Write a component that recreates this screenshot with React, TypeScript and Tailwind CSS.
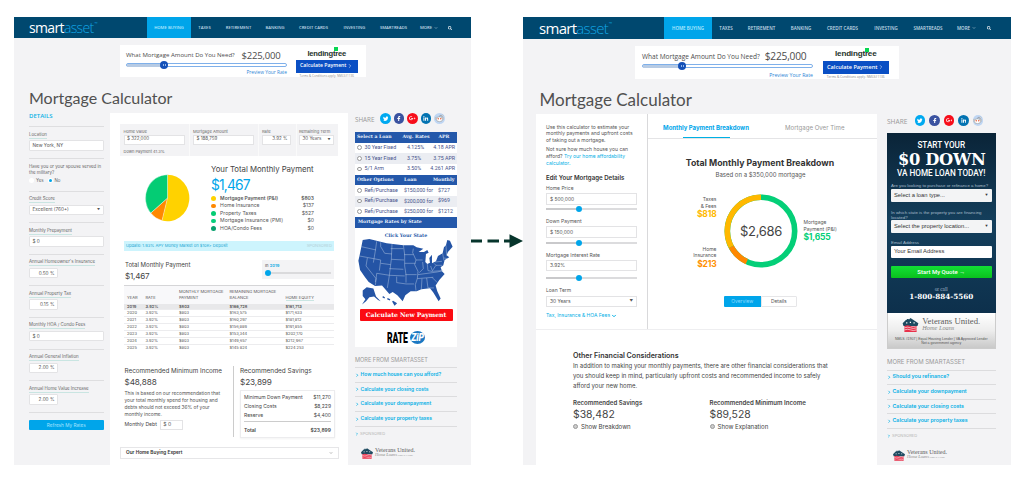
import React from "react";
import clsx from "clsx";
import { FaTwitter, FaFacebookF, FaGooglePlusG, FaLinkedinIn, FaSearch } from "react-icons/fa";
import { ChevronDown, ChevronRight } from "lucide-react";

type Size = { small?: boolean };

function Logo({ className }: { className: string }) {
  return (
    <div className={clsx("flex items-center font-['Open_Sans',sans-serif] font-normal text-white", className)}>
      smart<span className="font-light text-[#12a6e4]">asset</span>
      <span className="-mt-[8px] ml-[1px] text-[4px] tracking-normal text-[#0aa5e2]">™</span>
    </div>
  );
}

function Nav({ small }: Size) {
  const items: [string, string][] = small
    ? [["TAXES", "w-[27px]"], ["RETIREMENT", "w-[41px]"], ["BANKING", "w-[32px]"], ["CREDIT CARDS", "w-[45px]"], ["INVESTING", "w-[37px]"], ["SMARTREADS", "w-[41px]"]]
    : [["TAXES", "w-[28px]"], ["RETIREMENT", "w-[43px]"], ["BANKING", "w-[36px]"], ["CREDIT CARDS", "w-[47px]"], ["INVESTING", "w-[40px]"], ["SMARTREADS", "w-[44px]"]];
  return (
    <nav
      className={clsx(
        "flex items-stretch bg-[#00486f] text-center font-['Open_Sans',sans-serif] font-semibold text-[#c3dbe7]",
        small ? "h-[21px] pl-[15px] text-[4.2px] leading-[21px]" : "h-[22px] pl-[16px] text-[4.5px] leading-[22px]",
      )}
    >
      <Logo className={small ? "w-[118px] text-[14px] tracking-[-0.65px]" : "w-[125px] text-[15px] tracking-[-0.7px]"} />
      <div className={clsx("bg-[#00a5ea] text-[#b9eaff]", small ? "w-[44px]" : "w-[48px]")}>HOME BUYING</div>
      {items.map(([t, w]) => (
        <div key={t} className={w}>{t}</div>
      ))}
      <div className={clsx("flex items-center justify-center gap-[2px]", small ? "w-[30px]" : "w-[33px]")}>
        MORE <ChevronDown className="size-[4px]" strokeWidth={3} />
      </div>
      <div className="flex w-[12px] items-center justify-center text-white">
        <FaSearch className="size-[4px]" />
      </div>
    </nav>
  );
}

function LenderBanner({ small }: Size) {
  return (
    <div
      className={clsx(
        "flex bg-white font-['Open_Sans',sans-serif]",
        small ? "ml-[106px] mt-[7px] h-[32px] w-[246px] pl-[6px]" : "ml-[112px] mt-[7px] h-[33px] w-[264px] pl-[7px]",
      )}
    >
      <div className={small ? "w-[161px]" : "w-[171px]"}>
        <div className={clsx("mt-[4.5px] flex h-[13px] items-center justify-between text-[#4c4c4c]", small ? "pr-[6.5px]" : "pr-[6.5px]")}>
          <span className={small ? "text-[6.05px]" : "text-[6.55px]"}>What Mortgage Amount Do You Need?</span>
          <span className={small ? "text-[9.5px] tracking-[-0.2px]" : "text-[10.2px] tracking-[-0.2px]"}>$225,000</span>
        </div>
        <div className="mt-[0.5px] flex h-[4px] items-center rounded-full border border-[#7fb0ea] bg-white">
          <div className={clsx("h-[3px] bg-[#b7cbe4]", small ? "w-[33px]" : "w-[35px]")} />
          <div className="flex size-[8px] shrink-0 items-center justify-center rounded-full bg-[#1450b8]">
            <div className="h-[2px] w-[3px] border-x border-[#8eb5ea]" />
          </div>
        </div>
        <div className={clsx("text-right text-[#2f86d6]", small ? "mt-[3px] text-[4.8px] leading-[5px]" : "mt-[4px] text-[5.2px] leading-[6px]")}>Preview Your Rate</div>
      </div>
      <div className={small ? "ml-[9px] w-[61.5px]" : "ml-[10px] w-[65.5px]"}>
        <div className={clsx("relative mt-[4px] flex h-[9px] items-center justify-center font-['Liberation_Sans',sans-serif] font-bold tracking-[-0.2px] text-[#25332c]", small ? "text-[7.6px]" : "text-[8.1px]")}>
          lendingtree
          <span className="absolute right-[20px] top-[-2px] size-[4px] bg-[#08d651]" />
        </div>
        <div className={clsx("mt-[2px] flex h-[12.5px] items-center justify-center bg-[#0a4fc4] font-semibold text-white", small ? "text-[5.15px]" : "text-[5.6px]")}>
          Calculate Payment <ChevronRight className="ml-[1px] size-[6px]" />
        </div>
        <div className={clsx("mt-px text-center leading-[4px] text-[#888]", small ? "text-[3px]" : "text-[3.2px]")}>Terms &amp; Conditions apply. NMLS#1136</div>
      </div>
    </div>
  );
}

function Share({ small }: Size) {
  const c = "flex size-[10.5px] items-center justify-center rounded-full text-white";
  return (
    <div className={clsx("flex h-[11px] items-center", small ? "gap-[3.1px]" : "gap-[4px]")}>
      <span className={clsx("pt-[2px] font-['Open_Sans',sans-serif] text-[#999]", small ? "w-[22px] text-[6.3px]" : "w-[23.5px] text-[6.6px]")}>SHARE</span>
      <span className={clsx(c, "bg-[#00a9f0]")}><FaTwitter className="size-[5.5px]" /></span>
      <span className={clsx(c, "bg-[#3a52a0]")}><FaFacebookF className="size-[5.5px]" /></span>
      <span className={clsx(c, "bg-[#f70d1a]")}><FaGooglePlusG className="size-[6.5px]" /></span>
      <span className={clsx(c, "bg-[#0272b1]")}><FaLinkedinIn className="size-[5.5px]" /></span>
      <span className={clsx(c, "bg-[#bfd6f3]")}>
        <svg viewBox="0 0 10 10" className="size-[9px]">
          <path d="M5 3.2 5.6 1.4 8 2" fill="none" stroke="#777" strokeWidth=".5" />
          <circle cx="8" cy="2" r=".9" fill="#fff" stroke="#777" strokeWidth=".4" />
          <circle cx="1.4" cy="4.8" r="1.1" fill="#fff" stroke="#777" strokeWidth=".4" />
          <circle cx="8.6" cy="4.8" r="1.1" fill="#fff" stroke="#777" strokeWidth=".4" />
          <ellipse cx="5" cy="5.8" rx="3.6" ry="2.7" fill="#fff" stroke="#777" strokeWidth=".5" />
          <circle cx="3.6" cy="5.3" r=".8" fill="#e5532d" />
          <circle cx="6.4" cy="5.3" r=".8" fill="#e5532d" />
        </svg>
      </span>
    </div>
  );
}

function VeteransLogo({ big }: { big?: boolean }) {
  return (
    <div className="flex items-center">
      <svg viewBox="0 0 18 16" className={big ? "h-[14px] w-[17px]" : "h-[11px] w-[12px]"}>
        <path d="M0 6 4 2h1V1h2v1l2-2 9 6-1 3H1Z" fill="#1d4a60" />
        <path d="M4 5.5h1.4M8.2 5h1.4M12.4 5.5h1.4" stroke="#fff" strokeWidth="1.3" />
        <path d="M2 9q4-1.5 7 0t7 0v7H2Z" fill="#e8304a" />
        <path d="M2 11.2q4-1.5 7 0t7 0M2 13.6q4-1.5 7 0t7 0" stroke="#fff" strokeWidth=".7" fill="none" />
      </svg>
      <div className={clsx("font-['Liberation_Serif',serif] text-[#5c5c5c]", big ? "ml-[3px]" : "ml-[2px]")}>
        <div className={big ? "text-[8.7px] leading-[7.5px]" : "text-[6px] leading-[5px]"}>Veterans United.</div>
        <div className={clsx("italic text-[#888]", big ? "text-[6.3px] leading-[6px]" : "text-[4.3px] leading-[4px]")}>
          Home Loans{!big && <span className="text-[2.8px] not-italic"> NMLS #1907</span>}
        </div>
      </div>
    </div>
  );
}

function MoreLinks({ links, small }: { links: string[]; small?: boolean }) {
  return (
    <div>
      <div className={clsx("h-[8px] font-['Inter',sans-serif] leading-[8px] text-[#999]", small ? "text-[5.6px]" : "text-[6px]")}>MORE FROM SMARTASSET</div>
      <div className="mt-[3.5px]">
        {links.map((l) => (
          <div key={l} className={clsx("flex h-[14.6px] items-center border-t border-[#dcdcde] font-semibold text-[#06b0e6]", small ? "text-[5px]" : "text-[5.25px]")}>
            <ChevronRight className="mr-[1px] size-[4.5px] shrink-0" strokeWidth={4} />
            {l}
          </div>
        ))}
        <div className="flex h-[16px] items-center border-t border-[#dcdcde] text-[4.1px] text-[#b4b4b4]">
          <ChevronRight className="mr-[1px] size-[4px] text-[#06b0e6]" strokeWidth={4} />
          SPONSORED
        </div>
      </div>
    </div>
  );
}

const box = "flex items-center border border-[#e3e3e5] bg-white text-[#555]";

function Field({ label, value, narrow, select }: { label: string; value: string; narrow?: boolean; select?: boolean }) {
  return (
    <div className="h-[31.6px] border-t border-[#dedee0] pt-[4.5px]">
      <div className="flex h-[7px] items-center">
        <span className="border-b border-[#c9e5e2] text-[4.4px] leading-[6px] text-[#666]">{label}</span>
      </div>
      <div className={clsx(box, "mt-[1.5px] h-[10.5px] rounded-[1px] px-[2.5px] text-[4.7px]", narrow ? "w-[29px] justify-end" : "w-full justify-between")}>
        {value}
        {select && <span className="text-[3px]">▼</span>}
      </div>
    </div>
  );
}

function Details() {
  return (
    <aside className="w-[96px] pl-[15px]">
      <div className="w-[74.5px]">
        <div className="h-[13px] font-['Open_Sans',sans-serif] text-[6px] font-semibold leading-[6px] text-[#09b2e6]">DETAILS</div>
        <Field label="Location" value="New York, NY" />
        <div className="h-[33px] border-t border-[#dedee0] pt-[5px] text-[4.4px] leading-[6px] text-[#666]">
          Have you or your spouse served in
          <br />
          the military?
          <div className="mt-[2px] flex items-center">
            <span className="mr-[2px] size-[5px] rounded-full bg-white" />
            <span className="w-[11.5px]">Yes</span>
            <span className="mr-[2px] flex size-[5px] items-center justify-center rounded-full bg-white"><span className="size-[3px] rounded-full bg-[#00a5ea]" /></span>
            No
          </div>
        </div>
        <Field label="Credit Score" value="Excellent (760+)" select />
        <Field label="Monthly Prepayment" value="$ 0" />
        <Field label="Annual Homeowner's Insurance" value="0.50  %" narrow />
        <Field label="Annual Property Tax" value="0.15  %" narrow />
        <Field label="Monthly HOA / Condo Fees" value="$ 0" />
        <Field label="Annual General Inflation" value="2.00  %" narrow />
        <Field label="Annual Home Value Increase" value="2.00  %" narrow />
        <div className="border-t border-[#dedee0] pt-[7px]">
          <div className="h-[10.5px] rounded-[1px] bg-[#00a5ea] text-center text-[4.7px] leading-[10px] text-[#a5e3ff]">Refresh My Rates</div>
        </div>
      </div>
    </aside>
  );
}

const filters: [string, string, string, string, string][] = [
  ["Home Value", "$ 322,000", "w-[69px] pl-[3.5px]", "w-[61px]", "Down Payment 41.3%"],
  ["Mortgage Amount", "$ 188,759", "w-[69px] border-l pl-[3px]", "w-[61px]", ""],
  ["Rate", "3.92  %", "w-[38px] border-l pl-[3px]", "w-[29px] justify-end", ""],
  ["Remaining Term", "30 Years", "w-[42px] border-l pl-[2px]", "w-[35px] justify-between", ""],
];

const legend: [string, string, string][] = [
  ["bg-[#ffd200]", "Mortgage Payment (P&I)", "$803"],
  ["bg-[#ff8800]", "Home Insurance", "$137"],
  ["bg-[#04cc74]", "Property Taxes", "$527"],
  ["bg-[#08cf7c]", "Mortgage Insurance (PMI)", "$0"],
  ["bg-[#07a06c]", "HOA/Condo Fees", "$0"],
];

const schedule = [
  ["2019", "3.92%", "$803", "$166,728", "$161,713"],
  ["2020", "3.92%", "$803", "$163,575", "$171,633"],
  ["2021", "3.92%", "$803", "$160,297", "$181,812"],
  ["2022", "3.92%", "$803", "$156,889", "$191,855"],
  ["2023", "3.92%", "$803", "$153,344", "$202,170"],
  ["2024", "3.92%", "$803", "$149,657", "$212,967"],
  ["2025", "3.92%", "$803", "$145,824", "$224,253"],
];

const scheduleCols = "grid grid-cols-[18.5px_33.5px_50.5px_56px_1fr] pl-[3px]";

function MainOld() {
  return (
    <main className="w-[238px] bg-white pl-[10px] pt-[11px]">
      <div className="flex h-[32px] w-[218px] bg-[#f3f3f5]">
        {filters.map(([l, v, w, bw, note]) => (
          <div key={l} className={clsx("border-[#fafafa] pt-[3.5px] text-[#666]", w)}>
            <div className="text-[4.1px] leading-[7px]">{l}</div>
            <div className={clsx(box, "h-[10.5px] px-[2.5px] text-[4.5px]", bw)}>
              {v}
              {l === "Remaining Term" && <span className="text-[3px]">▼</span>}
            </div>
            <div className="mt-[3px] text-[4px] leading-[7px]">{note}</div>
          </div>
        ))}
      </div>
      <div className="flex h-[85px] pl-[25px] pt-[6.5px]">
        <svg viewBox="-22.5 -24 45 48" className="mt-[11.5px] h-[48px] w-[45px]">
          <path d="M0 0V-23.3A22 23.3 0 1 1-5.5 22.6Z" fill="#ffd200" />
          <path d="M0 0-5.5 22.6A22 23.3 0 0 1-16.8 15.1Z" fill="#ff8800" stroke="#fff" strokeWidth=".4" />
          <path d="M0 0-16.8 15.1A22 23.3 0 0 1 0-23.3Z" fill="#04cc74" stroke="#fff" strokeWidth=".4" />
        </svg>
        <div className="ml-[21px] w-[103px]">
          <div className="h-[12px] text-[7.8px] leading-[12px] tracking-[-0.03px] text-[#444]">Your Total Monthly Payment</div>
          <div className="h-[20px] text-[13.8px] leading-[21px] tracking-[-0.85px] text-[#00a5ea]">$1,467</div>
          <div>
            {legend.map(([c, l, v], i) => (
              <div key={l} className={clsx("flex h-[7.6px] items-center text-[#555]", i === 0 ? "text-[4.95px] font-semibold text-[#333]" : "text-[5.1px]")}>
                <span className={clsx("mr-[4.5px] size-[4.6px] rounded-full", c)} />
                <span className="grow">{l}</span>
                <span>{v}</span>
              </div>
            ))}
          </div>
        </div>
      </div>
      <div className="ml-[4px] flex h-[10px] w-[210px] items-center justify-between bg-[#cdf4fd] px-[2px] text-[4.1px] text-[#19a7d3]">
        <span>Update: 1.93% APY Money Market on $10K+ Deposit</span>
        <span className="text-[#b2cfd7]">SPONSORED</span>
      </div>
      <div className="ml-[4px] flex h-[34px] w-[210px] justify-between pt-[9px] text-[#444]">
        <div className="pl-px">
          <div className="text-[6.05px] leading-[9px]">Total Monthly Payment</div>
          <div className="mt-[2px] text-[8.1px] leading-[11px] tracking-[-0.2px]">$1,467</div>
        </div>
        <div className="h-[19px] w-[72px] bg-[#f3f3f5] px-[3px] pt-[2px] text-[4.1px] leading-[7px]">
          In <span className="font-semibold text-[#09a9e3]">2019</span>
          <div className="mt-[1px] flex h-[6px] items-center">
            <span className="size-[6px] rounded-full bg-[#00a5ea]" />
            <span className="h-[2px] grow bg-[#dadadc]" />
          </div>
        </div>
      </div>
      <div className="ml-[4px] h-[63.5px] w-[210px] overflow-hidden border-t border-[#d5d5d7] text-[#555]">
        <div className={clsx(scheduleCols, "h-[17.5px] items-end bg-[#f8f8fa] pb-[3px] text-[4.05px] leading-[5.6px]")}>
          <span>YEAR</span>
          <span>RATE</span>
          <span>MONTHLY MORTGAGE<br />PAYMENT</span>
          <span>REMAINING MORTGAGE<br />BALANCE</span>
          <span><span className="border-b border-[#c9e5e2]">HOME EQUITY</span></span>
        </div>
        {schedule.map((r, i) => (
          <div key={r[0]} className={clsx(scheduleCols, "h-[6.85px] border-b border-[#ececee] text-[4px] leading-[6.6px]", i === 0 && "bg-[#e8e8ea] font-semibold")}>
            {r.map((c, j) => <span key={j}>{c}</span>)}
          </div>
        ))}
      </div>
      <div className="flex h-[98.5px] pl-[4.5px] pt-[17px] text-[#444]">
        <div className="h-[71.5px] w-[109px] border-r border-[#ccc]">
          <div className="h-[9px] text-[6.3px] leading-[10px]">Recommended Minimum Income</div>
          <div className="h-[15px] text-[8.2px] leading-[14px] tracking-[-0.1px]">$48,888</div>
          <div className="text-[4.8px] leading-[7.1px] text-[#555]">
            This is based on our recommendation that<br />your total monthly spend for housing and<br />debts should not exceed 36% of your<br />monthly income.
          </div>
          <div className="mt-[2px] flex items-center text-[5.1px]">
            Monthly Debt <span className={clsx(box, "ml-[3px] h-[10.5px] w-[23px] px-[2.5px]")}>$ 0</span>
          </div>
        </div>
        <div className="ml-[6.5px] w-[95px]">
          <div className="h-[9px] text-[6.45px] leading-[10px]">Recommended Savings</div>
          <div className="h-[15px] text-[8.2px] leading-[14px] tracking-[-0.1px]">$23,899</div>
          <div className="h-[48px] border border-[#ececee] px-[3px] pt-[2px] text-[5px] leading-[9px] shadow-xs">
            {[["Minimum Down Payment", "$11,270"], ["Closing Costs", "$8,229"], ["Reserve", "$4,400"]].map(([a, b]) => (
              <div key={a} className="flex justify-between"><span>{a}</span><span>{b}</span></div>
            ))}
            <div className="mt-[1px] flex justify-between border-t border-[#ccc] pt-[4px] font-semibold"><span>Total</span><span>$23,899</span></div>
          </div>
        </div>
      </div>
      <div className="flex h-[12px] w-[218.5px] items-center justify-between border border-[#e6e6e8] px-[5px] text-[4.75px] font-semibold text-[#333]">
        Our Home Buying Expert <ChevronDown className="size-[4px] text-[#777]" strokeWidth={3} />
      </div>
    </main>
  );
}

function UsMap() {
  return (
    <svg viewBox="15 402 306 206" className="h-[68.6px] w-[102px]">
      <path
        d="M38 408 58 405 110 418 160 424 190 424 200 430 220 434 206 444 222 444 232 438 236 446 228 450 226 474 232 480 240 476 238 462 246 452 246 478 258 472 264 456 278 448 282 430 288 424 292 408 300 410 308 428 294 444 290 454 298 460 284 468 280 484 272 490 276 502 284 510 268 528 257 545 262 562 272 584 266 592 250 566 240 553 214 556 200 562 182 562 166 574 158 592 142 574 128 564 118 570 96 545 75 546 56 534 44 518 30 498 25 470 30 448Z"
        fill="#2454a5"
      />
      <path
        d="M34 428 78 438M80 412 76 440 70 476M28 456 92 468M52 462 48 486 78 524 76 534M92 415 92 428 104 448 126 450M126 420 124 466M122 434H160M92 468 88 500M92 478 122 482 124 466 162 468M122 482 118 514 80 508M80 508 76 544M118 494 160 496M118 514 112 552M118 514 164 516M160 422 164 452 164 486 168 512 168 536M162 452H190M164 478H196M166 512H200M190 434 188 446 198 468 194 482 204 502 202 524 196 542 198 560M198 468H218M140 518V536L168 540M168 540H192M218 474 220 494 208 506M232 480 234 500M204 512 262 504 280 500M202 524 250 520M216 524 214 556M230 522 234 552 252 552M246 520 262 536M234 500 246 502 258 484 252 478M246 502 278 500M258 484H276M256 474 276 472M278 448 282 470M288 424 290 454M282 462 292 464M242 486 246 498"
        fill="none"
        stroke="#c5d4ea"
        strokeWidth="1.3"
      />
      <path d="M38 560 50 550 70 554 78 578 92 592 84 588 72 578 58 580 48 592 36 602 46 586 38 576Z" fill="#2454a5" />
      <path d="M98 578 104 582M112 584 120 588M128 592 138 598 134 602Z" stroke="#2454a5" strokeWidth="4" fill="#2454a5" />
    </svg>
  );
}

const loanCols = "grid items-center px-[2px]";
const slab = "font-['DejaVu_Serif',serif] font-bold text-[#e8f0fb] bg-[#2458aa]";

function RateWidget() {
  const rates = [["30 Year Fixed", "4.125%", "4.18 APR"], ["15 Year Fixed", "3.75%", "3.75 APR"], ["5/1 Arm", "3.50%", "4.261 APR"]];
  const refi = [["Refi/Purchase", "$150,000 for", "$727"], ["Refi/Purchase", "$200,000 for", "$969"], ["Refi/Purchase", "$250,000 for", "$1212"]];
  const ring = <span className="mr-[3px] inline-block size-[4.5px] rounded-full border-[0.6px] border-[#999] bg-white align-middle" />;
  return (
    <div className="bg-white font-['Roboto',sans-serif] text-[5.3px] text-[#44518a]">
      <div className={clsx(loanCols, slab, "h-[10.6px] grid-cols-[45.5px_36px_1fr] text-[4.6px]")}><span>Select a Loan</span><span>Avg. Rates</span><span>APR</span></div>
      {rates.map((r, i) => (
        <div key={r[0]} className={clsx(loanCols, "h-[10.7px] grid-cols-[50px_1fr_auto]", i === 1 && "bg-[#ebedf2]")}><span>{ring}{r[0]}</span><span>{r[1]}</span><span>{r[2]}</span></div>
      ))}
      <div className={clsx(loanCols, slab, "h-[10.7px] grid-cols-[47px_29px_1fr] text-[4.6px]")}><span>Other Options</span><span>Loan</span><span>Monthly</span></div>
      {refi.map((r, i) => (
        <div key={r[1]} className={clsx(loanCols, "h-[10.7px] grid-cols-[47px_34px_1fr]", i === 1 && "bg-[#ebedf2]")}><span>{ring}{r[0]}</span><span className="text-[5.15px]">{r[1]}</span><span>{r[2]}</span></div>
      ))}
      <div className={clsx(slab, "h-[10.7px] px-[3px] text-[4.6px] leading-[10.7px]")}>Mortgage Rates by State</div>
      <div className="h-[10px] pt-[4px] text-center font-['DejaVu_Serif',serif] text-[4.7px] font-bold leading-[8px] text-[#2a5ba8]">Click Your State</div>
      <UsMap />
      <div className="mx-auto mt-[2px] h-[12px] w-[93px] rounded-[1px] bg-[#fb0b12] text-center font-['DejaVu_Serif',serif] text-[6.1px] font-bold leading-[11.5px] text-white">Calculate New Payment</div>
      <div className="mt-[8px] flex h-[18px] items-center justify-center font-['Roboto',sans-serif] text-[14px] font-black leading-none text-black">
        <span className="inline-block w-[22.5px] origin-left scale-x-[.62] tracking-[-0.3px]">RATE</span>
        <span className="flex h-[13px] w-[15px] items-center justify-center rounded-[50%] bg-[#1b78c2] text-[11.5px] italic text-white"><span className="scale-x-75">ZiP</span></span>
      </div>
    </div>
  );
}

function OldPage() {
  return (
    <section className="h-[448px] w-[457px] overflow-hidden bg-[#f3f3f5]">
      <Nav small />
      <LenderBanner small />
      <h1 className="h-[36px] pl-[15px] pt-[8.5px] font-['Lato',sans-serif] text-[16px] font-normal leading-[24px] text-[#505050]">Mortgage Calculator</h1>
      <div className="flex h-[352px]">
        <Details />
        <MainOld />
        <aside className="w-[109px] pl-[7px]">
          <Share small />
          <div className="mt-[8px]"><RateWidget /></div>
          <div className="mt-[9px]"><MoreLinks small links={["How much house can you afford?", "Calculate your closing costs", "Calculate your downpayment", "Calculate your property taxes"]} /></div>
          <div className="mt-[6px] pl-[6px]"><VeteransLogo /></div>
        </aside>
      </div>
    </section>
  );
}

function Slider() {
  return (
    <div className="flex h-[6px] w-[91px] items-center">
      <span className="h-[2px] w-[30px] bg-[#c9c9cb]" />
      <span className="size-[6px] rounded-full bg-[#00a5ea]" />
      <span className="h-[2px] grow bg-[#dcdcde]" />
    </div>
  );
}

function EditPanel() {
  const input = clsx(box, "w-[91px] px-[3px] text-[4.9px]");
  return (
    <div className="w-[112px] border-r border-[#d9d9db] pl-[10px] pt-[9.5px] text-[5px] text-[#555]">
      <p className="leading-[6.6px]">Use this calculator to estimate your<br />monthly payments and upfront costs<br />of taking out a mortgage.</p>
      <p className="mt-[3.2px] leading-[6.6px]">Not sure how much house you can<br />afford? <span className="text-[#06b0e6]">Try our home affordability<br />calculator.</span></p>
      <div className="mt-[7.2px] h-[9px] text-[6.1px] font-semibold leading-[9px] text-[#333]">Edit Your Mortgage Details</div>
      <div className="mt-[3px] h-[6px] leading-[6px]">Home Price</div>
      <div className={clsx(input, "mt-[2px] h-[11.5px]")}>$ 500,000</div>
      <div className="mt-[1.5px]"><Slider /></div>
      <div className="mt-[6px] h-[6px] leading-[6px]">Down Payment</div>
      <div className={clsx(input, "mt-[2px] h-[11.5px]")}>$ 150,000</div>
      <div className="mt-[2.3px]"><Slider /></div>
      <div className="mt-[5.7px] h-[6px] leading-[6px]">Mortgage Interest Rate</div>
      <div className={clsx(input, "mt-[2.5px] h-[11px]")}>3.92%</div>
      <div className="mt-[3.5px]"><Slider /></div>
      <div className="mt-[6.5px] h-[6px] leading-[6px]">Loan Term</div>
      <div className={clsx(input, "mt-[2.5px] h-[11px] justify-between")}>30 Years <span className="text-[3.5px]">▼</span></div>
      <div className="mt-[5.5px] flex items-center gap-[1px] leading-[7px] text-[#06b0e6]">Tax, Insurance &amp; HOA Fees <ChevronDown className="size-[6px]" strokeWidth={4} /></div>
    </div>
  );
}

function Breakdown() {
  const amount = "pt-px text-[8.5px] font-bold leading-[9.5px] tracking-[-0.2px]";
  return (
    <div className="w-[229px]">
      <div className="flex h-[24.5px] border-b border-[#e4e4e6] pl-[14px] leading-[27.5px]">
        <div className="flex w-[88px] flex-col items-center text-[6px] font-bold text-[#00a5ea]">
          <span className="h-[22.5px]">Monthly Payment Breakdown</span>
          <span className="h-[2px] w-[47px] bg-[#00b0e4]" />
        </div>
        <div className="ml-[35px] text-[6.1px] text-[#999]">Mortgage Over Time</div>
      </div>
      <div className="pr-[5px] pt-[19px] text-center text-[8.75px] font-bold leading-[11px] text-[#333]">Total Monthly Payment Breakdown</div>
      <div className="h-[12px] pr-[4px] text-center text-[6px] leading-[12px] text-[#555]">Based on a $350,000 mortgage</div>
      <div className="mt-[13.5px] flex h-[74.5px] text-[5px] leading-[6.5px] text-[#555]">
        <div className="w-[68.5px] text-right">
          <div className="pt-[2px]">Taxes<br />&amp; Fees</div>
          <div className={clsx(amount, "text-[#ffb800]")}>$818</div>
          <div className="pt-[26px]">Home<br />Insurance</div>
          <div className={clsx(amount, "text-[#ff9000]")}>$213</div>
        </div>
        <svg viewBox="-37 -37 74 74" className="ml-[7px] h-[74px] w-[74px]">
          <circle r="33.7" fill="none" stroke="#04cf78" strokeWidth="5.6" />
          <path d="M-14.2 30.6A33.7 33.7 0 0 1-29.8 15.8" fill="none" stroke="#ff8800" strokeWidth="5.6" />
          <path d="M-29.8 15.8A33.7 33.7 0 0 1 0-33.7" fill="none" stroke="#ffb800" strokeWidth="5.6" />
          <text x="0" y="4.6" textAnchor="middle" className="fill-[#444] font-['Inter',sans-serif] text-[13px] tracking-[-0.3px]">$2,686</text>
        </svg>
        <div className="ml-[6px] pt-[25px]">
          Mortgage<br />Payment (P&amp;I)
          <div className={clsx(amount, "text-[#04cf78]")}>$1,655</div>
        </div>
      </div>
      <div className="ml-[76px] mt-[27.5px] flex h-[11px] w-[73px] text-center text-[4.9px] leading-[10.5px]">
        <div className="w-1/2 rounded-l-[1px] bg-[#00a5ea] text-[#8fdcff]">Overview</div>
        <div className="w-1/2 rounded-r-[1px] border border-[#e6e6e8] leading-[9.5px] text-[#555]">Details</div>
      </div>
    </div>
  );
}

function Considerations() {
  return (
    <div className="h-[135px] w-[341px] bg-white pl-[37px] pt-[20px] text-[#444]">
      <div className="h-[11px] text-[7.1px] font-semibold leading-[11px] text-[#333]">Other Financial Considerations</div>
      <p className="text-[6.03px] leading-[10px]">
        In addition to making your monthly payments, there are other financial considerations that<br />
        you should keep in mind, particularly upfront costs and recommended income to safely<br />
        afford your new home.
      </p>
      <div className="mt-[7px] flex">
        {[["Recommended Savings", "$38,482", "Show Breakdown"], ["Recommended Minimum Income", "$89,528", "Show Explanation"]].map(([a, b, c]) => (
          <div key={a} className="w-[136.5px]">
            <div className="text-[6.1px] font-semibold leading-[10px]">{a}</div>
            <div className="h-[13px] text-[10.4px] leading-[13px]">{b}</div>
            <div className="flex h-[10.5px] items-center text-[6.05px]"><span className="mr-[3px] size-[5px] rounded-full border border-[#999] bg-[#ccc]" />{c}</div>
          </div>
        ))}
      </div>
    </div>
  );
}

function VaAd() {
  const sel = "flex h-[12.5px] items-center justify-between rounded-[1px] bg-[#f3f4f5] px-[3px] text-[5.8px] text-[#333]";
  return (
    <div className="w-[108.5px] overflow-hidden font-['Liberation_Sans',sans-serif]">
      <div className="h-[180px] bg-gradient-to-b from-[#0a2438] via-[#143f5c] to-[#0d304c] px-[4px] pt-[6px] text-[4.4px] text-[#a8bccb]">
        <div className="text-center font-['Roboto',sans-serif] text-[8.2px] font-medium leading-[12px] text-white">START YOUR</div>
        <div className="flex h-[17px] justify-center font-['DejaVu_Serif',serif] text-[16.6px] font-bold leading-[17px] tracking-[-0.3px] text-white"><span className="scale-x-[.98]">$0 DOWN</span></div>
        <div className="text-center font-['Roboto',sans-serif] text-[8.2px] font-medium leading-[11px] text-white">VA HOME LOAN TODAY!</div>
        <div className="mt-[4px] h-[6px] leading-[6px]">Are you looking to purchase or refinance a home?</div>
        <div className={sel}>Select a loan type... <span className="text-[4px]">▼</span></div>
        <div className="mt-[8px] h-[10.5px] leading-[5px]">In which state is the property you are financing<br />located?</div>
        <div className={sel}>Select the property location... <span className="text-[4px]">▼</span></div>
        <div className="mt-[7px] h-[6px] leading-[6px]">Email Address</div>
        <div className={clsx(sel, "bg-white px-[2px]")}>Your Email Address</div>
        <div className="mt-[8px] h-[12px] rounded-[1px] bg-gradient-to-b from-[#12e035] to-[#0bc11d] text-center font-['Roboto',sans-serif] text-[6px] font-medium leading-[11px] text-white">Start My Quote →</div>
        <div className="mt-[8px] text-center font-['Liberation_Serif',serif] text-[5.2px] leading-[6px]">or call</div>
        <div className="text-center font-['DejaVu_Serif',serif] text-[7.2px] font-bold leading-[10px] text-white">1-800-884-5560</div>
      </div>
      <div className="h-[36px] border border-t-0 border-[#ccc] bg-gradient-to-b from-white via-[#ededed] to-[#c9c9c9] text-center text-[3.5px] leading-[4.3px] text-[#555]">
        <div className="flex h-[21px] justify-center pt-[2px] text-left"><VeteransLogo big /></div>
        <div className="pt-[2.5px]">NMLS #1907 | Equal Housing Lender | VA Approved Lender<br />Not a government agency</div>
      </div>
    </div>
  );
}

function NewPage() {
  return (
    <section className="h-[448px] w-[488px] overflow-hidden bg-[#f3f3f5]">
      <Nav />
      <LenderBanner />
      <h1 className="h-[35px] pl-[16.5px] pt-[8.5px] font-['Lato',sans-serif] text-[17px] font-normal leading-[24px] text-[#505050]">Mortgage Calculator</h1>
      <div className="flex pl-[13px]">
        <div className="w-[341px]">
          <div className="flex h-[215px] bg-white">
            <EditPanel />
            <Breakdown />
          </div>
          <div className="border-t border-[#eeeef0]"><Considerations /></div>
        </div>
        <aside className="ml-[10px] w-[108.5px]">
          <div className="pt-[1px]"><Share /></div>
          <div className="mt-[7px]"><VaAd /></div>
          <div className="mt-[9px]"><MoreLinks links={["Should you refinance?", "Calculate your downpayment", "Calculate your closing costs", "Calculate your property taxes"]} /></div>
          <div className="mt-[6px] pl-[6px]"><VeteransLogo /></div>
        </aside>
      </div>
    </section>
  );
}

export default function App() {
  return (
    <div className="flex h-[485px] w-[1026px] items-start whitespace-nowrap bg-white pl-[14px] pt-[17px] font-['Inter',sans-serif]">
      <OldPage />
      <svg viewBox="0 0 52 16" className="mt-[216px] h-[16px] w-[52px]">
        <path d="M0 8H11M16.5 8H28M33 8H41" stroke="#07352c" strokeWidth="2.8" />
        <path d="M38.5 1.2 52 8 38.5 14.8Z" fill="#07352c" />
      </svg>
      <NewPage />
    </div>
  );
}
